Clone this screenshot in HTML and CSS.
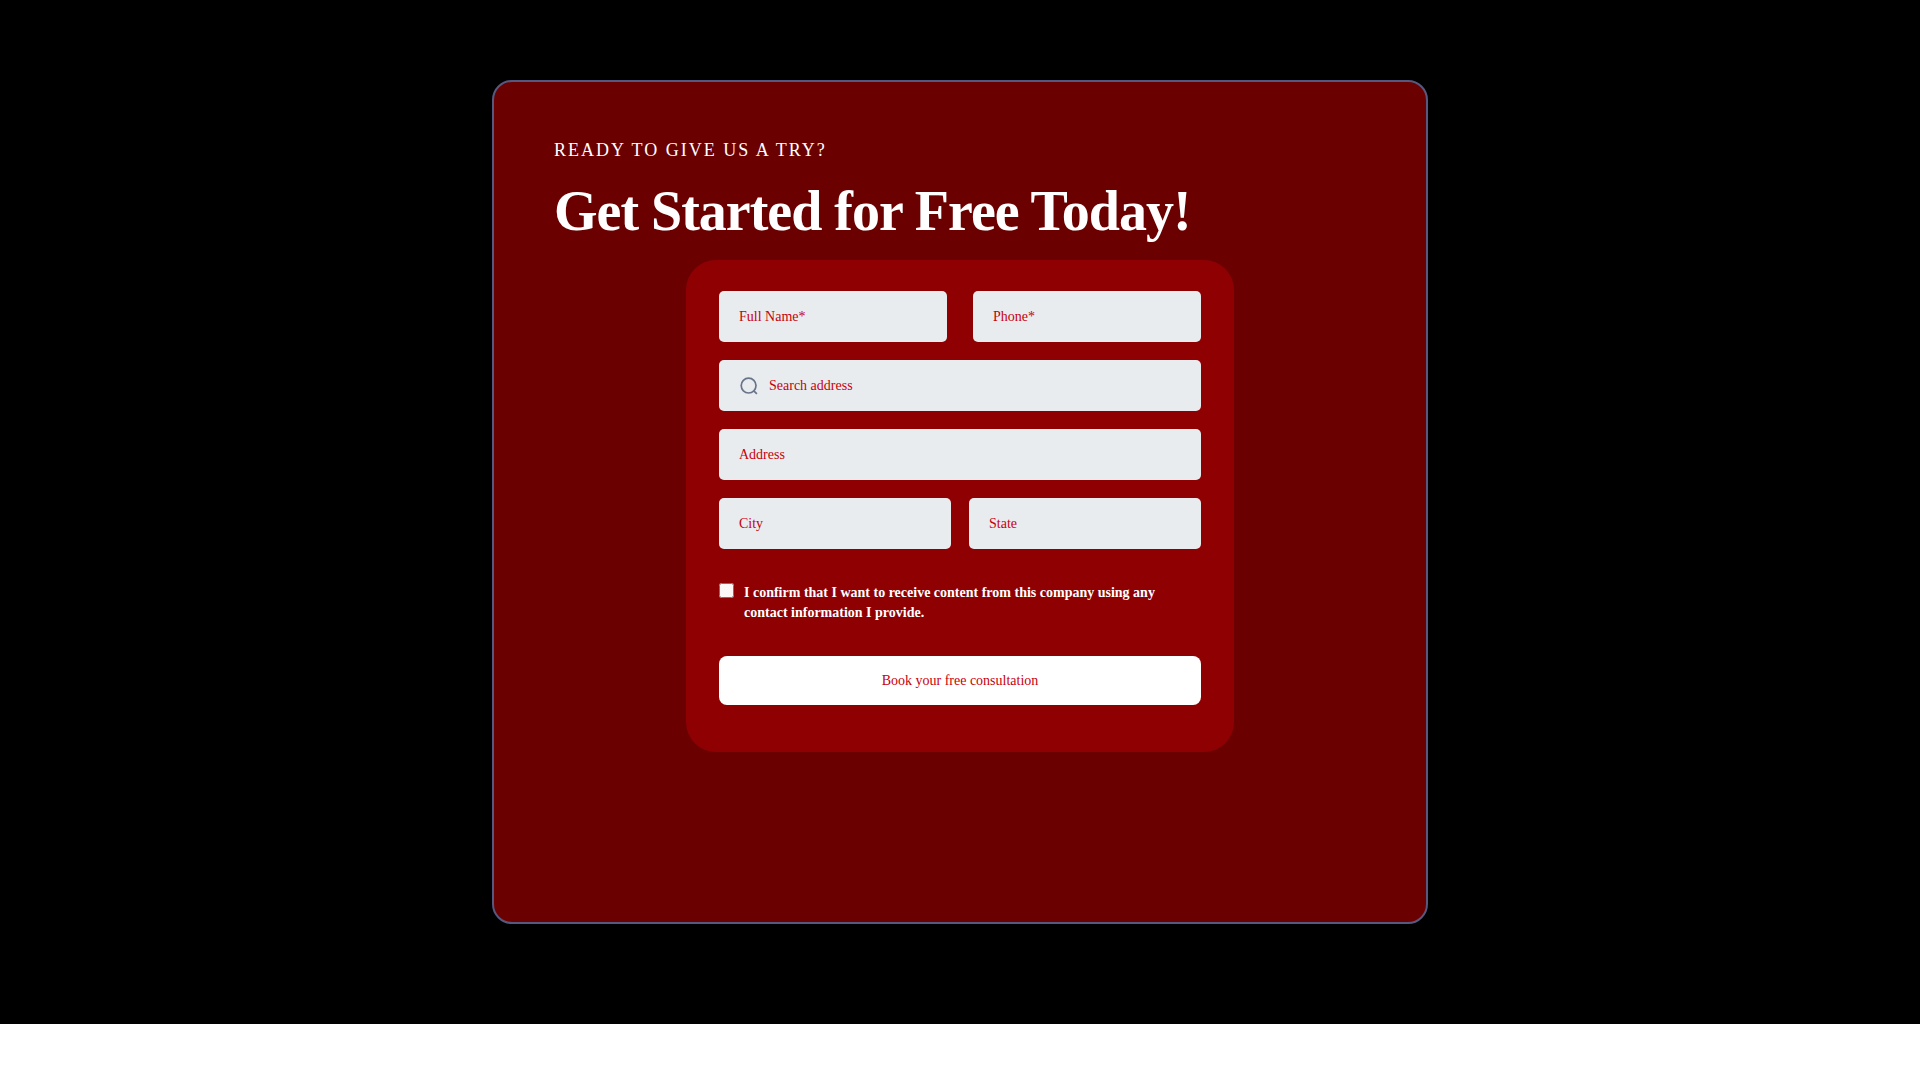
FILE: index.html
```html
<!DOCTYPE html>
<html lang="en">
<head>
  <meta charset="utf-8">
  <meta name="viewport" content="width=device-width, initial-scale=1">
  <title>Get Started for Free Today!</title>
  <link rel="stylesheet" href="styles.css">
</head>
<body>
  <main class="section">
    <div class="card">
      <p class="eyebrow">READY TO GIVE US A TRY?</p>
      <h1 class="title">Get Started for Free Today!</h1>
      <form class="form">
        <div class="fields">
          <div class="row row-wide">
            <input class="field" type="text" name="name" placeholder="Full Name*" aria-label="Full Name" required>
            <input class="field" type="tel" name="phone" placeholder="Phone*" aria-label="Phone" required>
          </div>
          <div class="field search">
            <svg class="search-icon" viewBox="0 0 20 20" aria-hidden="true">
              <circle cx="9.6" cy="9.6" r="7.4"/>
              <path d="M14.8 14.8 L17.9 17.9"/>
            </svg>
            <input class="search-input" type="text" name="search" placeholder="Search address" aria-label="Search address">
          </div>
          <input class="field" type="text" name="address" placeholder="Address" aria-label="Address">
          <div class="row">
            <input class="field" type="text" name="city" placeholder="City" aria-label="City">
            <input class="field" type="text" name="state" placeholder="State" aria-label="State">
          </div>
        </div>
        <div class="consent">
          <input class="consent-box" type="checkbox" id="consent" name="consent">
          <label class="consent-text" for="consent">I confirm that I want to receive content from this company using any contact information I provide.</label>
        </div>
        <button class="submit" type="submit">Book your free consultation</button>
      </form>
    </div>
  </main>
</body>
</html>
```

FILE: styles.css
```css
*,
*::before,
*::after {
  box-sizing: border-box;
}

body {
  margin: 0;
  background: #fff;
  font-family: "Times New Roman", "Liberation Serif", serif;
  font-size: 14px;
  line-height: 20px;
}

.section {
  padding: 80px 20px 100px;
  background: #000;
}

.card {
  max-width: 936px;
  margin: 0 auto;
  padding: 56px 60px 170px;
  border: 2px solid #555980;
  border-radius: 20px;
  background: #6b0000;
  color: #fff;
}

.eyebrow {
  margin: 0 0 16px;
  font-size: 18px;
  line-height: 24px;
  letter-spacing: 2px;
}

.title {
  margin: 0 0 16px;
  font-size: 56px;
  line-height: 66px;
  letter-spacing: -1px;
}

.form {
  max-width: 548px;
  margin: 0 auto;
  padding: 31px 33px 47px;
  border-radius: 30px;
  background: #8f0003;
}

.fields {
  display: grid;
  gap: 18px;
}

.row {
  display: grid;
  grid-template-columns: 1fr 1fr;
  gap: 18px;
}

.row-wide {
  gap: 26px;
}

.field {
  width: 100%;
  min-width: 0;
  height: 51px;
  padding: 0 20px;
  border: 0;
  border-radius: 5px;
  background: #e8ecef;
  color: #c7000b;
  font: inherit;
}

.field::placeholder,
.search-input::placeholder {
  color: #c7000b;
  opacity: 1;
}

.search {
  display: flex;
  align-items: center;
  gap: 10px;
}

.search-icon {
  flex: none;
  width: 20px;
  height: 20px;
  fill: none;
  stroke: #68748a;
  stroke-width: 1.7;
}

.search-input {
  flex: 1;
  min-width: 0;
  padding: 0;
  border: 0;
  outline: 0;
  background: none;
  color: inherit;
  font: inherit;
}

.consent {
  display: flex;
  align-items: flex-start;
  gap: 10px;
  margin: 34px 0 33px;
}

.consent-box {
  flex: none;
  width: 15px;
  height: 15px;
  margin: 0;
  opacity: 0.97;
}

.consent-text {
  font-weight: bold;
}

.submit {
  display: block;
  width: 100%;
  height: 49px;
  border: 0;
  border-radius: 8px;
  background: #fff;
  color: #c7000b;
  font: inherit;
  cursor: pointer;
}
```
